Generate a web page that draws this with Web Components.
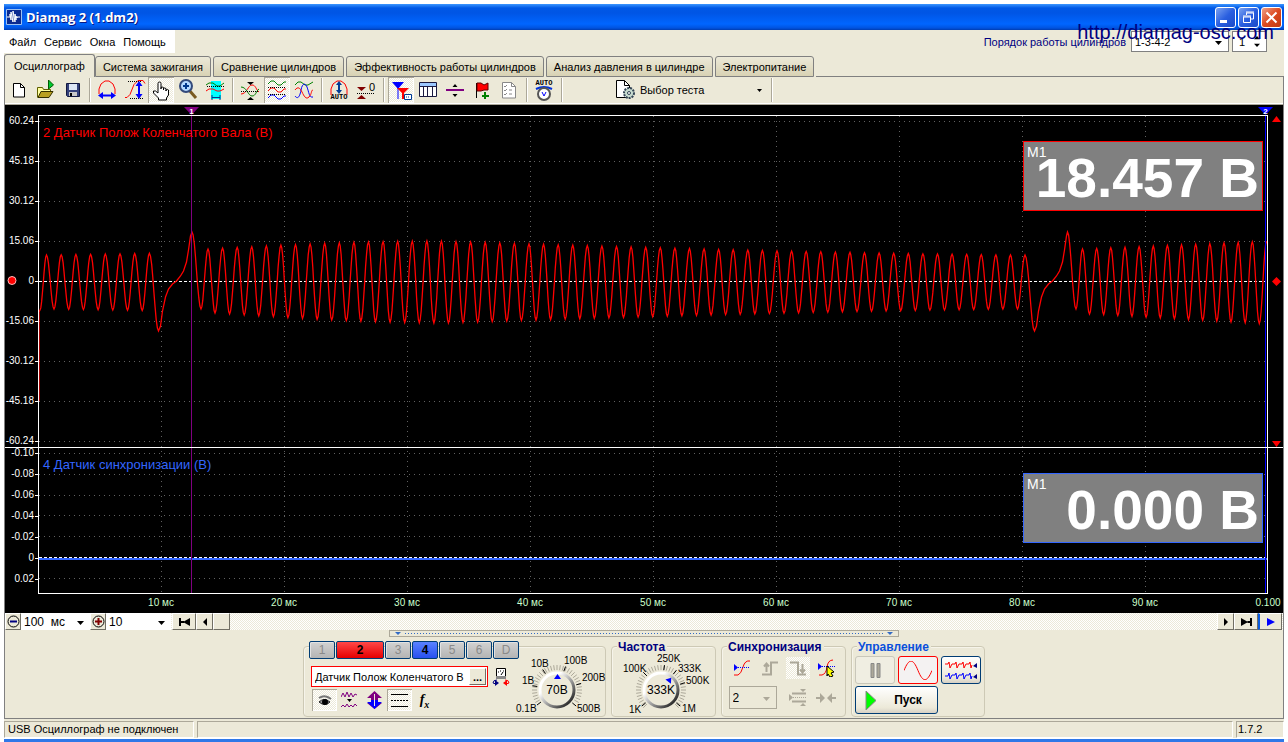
<!DOCTYPE html>
<html lang="ru">
<head>
<meta charset="utf-8">
<title>Diamag 2 (1.dm2)</title>
<style>
html,body{margin:0;height:100%}
body{background:#fff;color:#000;font:11px/14px "Liberation Sans",Arial,sans-serif;--face:#ece9d8;--line:#aca899;--hatch:repeating-conic-gradient(#fff 0 25%,#ece9d8 0 50%) 0 0/2px 2px}
</style>
</head>
<body>
<app-window></app-window>
<script>
const define = (tag, css, html, setup) => {
  const tpl = document.createElement('template');
  customElements.define(tag, class extends HTMLElement {
    constructor() {
      super();
      tpl.innerHTML = `<style>*{box-sizing:border-box}:host{display:block;box-sizing:border-box}${css}</style>` +
        (typeof html === 'function' ? html(this) : html);
      this.attachShadow({mode: 'open'}).append(tpl.content.cloneNode(true));
      if (setup) setup(this, this.shadowRoot);
    }
  });
};
const svg = (w, h, body, extra = '') =>
  `<svg width="${w}" height="${h}" viewBox="0 0 ${w} ${h}" fill="none" stroke-width="1" aria-hidden="true" ${extra}>${body}</svg>`;

const wave = (y, c) => `<path d="M4 ${y + 2}l3-3h3l4 4h3l3-3h2" stroke="${c}"/>`;
const auto = y => `<text x="13" y="${y}" text-anchor="middle" font-size="7" font-weight="700" font-family="Liberation Mono" fill="#000">AUTO</text>`;
const icons = {
  new: '<path d="M8.500 6.500h7l4 4v9.500h-11z" fill="#fff" stroke="#000"/><path d="M15.500 6.500v4h4" stroke="#000"/>',
  open: '<path d="M5.500 20.500v-10h5l1 2h7v3" fill="#ffffa0" stroke="#606000"/><path d="M6 20.500l3-6h12l-4 6z" fill="#b9a020" stroke="#333000"/><path d="M16.500 3v9l5-4z" fill="#00c832" stroke="#005a00"/>',
  save: '<path d="M7.500 6.500h13v13h-12l-1-1z" fill="#33407a" stroke="#111840"/><path d="M10 7h8v6h-8z" fill="#dce6f5"/><path d="M10 15h8v4h-8z" fill="#c8c8c8"/><path d="M11 16h2v3h-2z" fill="#000"/>',
  period: '<path d="M5 17v-5l2-5 4-3h4l4 3 2 5v5" stroke="#f00"/><path d="M7 18.500h12" stroke="#00f" stroke-width="2"/><path d="M9 15v7l-5-3.500zM17 15v7l5-3.500z" fill="#00f"/>',
  ampl: '<path d="M4 20.500h2l3-3 4-10 4-4h5l2 3" stroke="#f00"/><path d="M7 4.500h13M9 21.500h13" stroke="#000" stroke-dasharray="1 1"/><path d="M18 8v10" stroke="#00f" stroke-width="2"/><path d="M14.500 9h7L18 4zM14.500 17h7L18 22z" fill="#00f"/>',
  hand: '<path d="M10 16V6.500q0-1.500 1.500-1.500T13 6.500V12v-1.500q1-1 2.500 0V13v-1.500q1-1 2.500 0V14v-1q2-1 2.500 0v5l-2 3v2h-8v-2l-5-5v-2h2z" fill="#fff" stroke="#000"/>',
  zoom: '<path d="M14 13l7 8" stroke="#7a5a20" stroke-width="3"/><circle cx="11" cy="9" r="6" fill="#b4d8ff" stroke="#33497a" stroke-width="2"/><path d="M8 9h6M11 6v6" stroke="#00378c" stroke-width="2"/>',
  band: '<path d="M9 4h10v18H9z" fill="#0ff"/><path d="M4 8l3-2h4l4 3h3l4-3" stroke="#008000"/><path d="M5 9.500h18" stroke="#000" stroke-dasharray="1 1"/><path d="M4 14l3-2h4l4 2h3l4-2" stroke="#f00"/><path d="M10 20.500h8M10 18v5M18 18v5" stroke="#00378c"/>',
  cross: '<path d="M4 17c6 0 7-9 11-9s4 5 7 7" stroke="#f00"/><path d="M4 10c6 0 7 9 11 9s4-5 7-7" stroke="#008000"/><path d="M4 14.500h18" stroke="#000" stroke-dasharray="1 1"/><path d="M10 5h7l-3.500 3zM10 23h7l-3.500-3z" fill="#000"/>',
  waves: wave(5, '#008000') + wave(12, '#f00') + wave(19, '#00f') + '<path d="M4 10.500h18M4 17.500h18" stroke="#000" stroke-dasharray="1 1"/>',
  overlay: '<path d="M4 8l3-3h3l4 3h3l5-3" stroke="#008000"/><path d="M4 19c3 4 5 0 6-6s4-8 6-3 2 11 6 10" stroke="#00f"/><path d="M4 13c3-4 5-2 7 2s4 8 7 5 2-7 4-7" stroke="#f00"/>',
  auto: '<path d="M5 18v-6l2-5 4-3h4l4 3 2 5v6" stroke="#f00"/><path d="M13 6v8" stroke="#003c96" stroke-width="2"/><path d="M10 8h6l-3-4zM10 13h6l-3 4z" fill="#003c96"/>' + auto(22),
  zero: '<path d="M4 10h9l-4.500 4zM4 22h9l-4.500-4z" fill="#800000"/><path d="M4 16.500h18" stroke="#000" stroke-dasharray="1 1"/><text x="19" y="14" text-anchor="middle" font-size="11" font-family="Liberation Sans" fill="#000">0</text>',
  markers: '<path d="M4 5h12l-6 7z" fill="#00f"/><path d="M10 9v13" stroke="#00f"/><path d="M9 11h12l-6 6z" fill="#f00"/><path d="M15 14v8" stroke="#f00" stroke-width="2"/><path d="M16.500 17.500h7v5h-7z" fill="#fff" stroke="#003c96"/><path d="M18 20h4" stroke="#003c96" stroke-dasharray="1 1"/>',
  table: '<path d="M4.500 5.500h17v14h-17z" fill="#fff" stroke="#1a1a40"/><path d="M5 6h16v3H5z" fill="#9cc8ff"/><path d="M5 9.500h16M8.500 9v10M12.500 9v10M17.500 9v10" stroke="#1a1a40"/>',
  split: '<path d="M4 13h18" stroke="#800080" stroke-width="2"/><path d="M10.500 10h5L13 7zM10.500 17h5L13 20z" fill="#000"/>',
  flag: '<path d="M7.500 6v15" stroke="#000"/><path d="M8 6h4l3 2 4-2v7h-4l-3 1H8z" fill="#f00" stroke="#600000"/><path d="M13 19h7M16 15v7" stroke="#008000" stroke-width="2"/>',
  list: '<path d="M6.500 5.500h9l4 4v11.500h-13z" fill="#fff" stroke="#888"/><path d="M15.500 5.500v4h4M8 9l1 1 2-2M8 13l1 1 2-2M8 17l1 1 2-2M13 13h3M13 17h3" stroke="#888"/>',
  clock: auto(8) + '<path d="M5 12q8-4 16 0" stroke="#0032dc" stroke-width="2"/><circle cx="13" cy="17" r="6" fill="#fff" stroke="#555" stroke-width="2"/><path d="M11 15l2 4 2-4" stroke="#00f"/>'
};

define('app-window', `
:host{display:flex;flex-direction:column;min-height:100vh;padding:4px 4px 0;position:relative;overflow:hidden}
.body{display:flex;flex-direction:column;flex:1;background:var(--face)}
.page{display:flex;flex-direction:column;flex:1;border-left:1px solid gray;border-right:1px solid gray;border-bottom:1px solid gray}
scope-plot{flex:1}
.edge{height:5px;background:linear-gradient(#fff 1px,#2f78e8 1px);margin:0}
.mark{position:absolute;right:14px;top:20px;font-size:20px;line-height:24px;color:#000080;text-decoration:none}
`, `
<title-bar></title-bar>
<div class="body">
<menu-row></menu-row><tab-strip></tab-strip>
<div class="page"><tool-row></tool-row><scope-plot></scope-plot><scroll-row></scroll-row><control-panel></control-panel></div>
<status-bar></status-bar></div><div class="edge"></div>
<a class="mark" href="http://diamag-osc.com">http://diamag-osc.com</a>`);

define('title-bar', `
:host{display:flex;align-items:center;height:26px;padding:0 2px;background:linear-gradient(#3c96ff,#0058e6 4px,#0055e5 9px,#0066ff 20px,#0053e0 24px,#003cb0)}
h1{flex:1;margin:0 0 0 4px;font:700 13px/20px "Open Sans","Noto Sans",sans-serif;color:#fff;text-shadow:1px 1px #0a1883}
button{width:21px;height:21px;margin-left:2px;padding:0;border:1px solid #fff;border-radius:3px;background:linear-gradient(135deg,#7ba2f0,#2a5fe0 50%,#1a4ac8)}
.x{background:linear-gradient(135deg,#f0a088,#dc4a20 50%,#c03a10)}
svg{display:block}`,
svg(16, 16, '<path d="M.500 .500h15v15h-15z" fill="#0a2a90" stroke="#9cc0f0"/><path d="M1 8h3V5l1 6V3l2 10V2l2 11V5l1 6V7l1 2V8h3" stroke="#fff"/>') +
`<h1>Diamag 2 (1.dm2)</h1>
<button aria-label="Свернуть">${svg(19, 19, '<path d="M4 12h7v3H4z" fill="#fff"/>')}</button>
<button aria-label="Восстановить">${svg(19, 19, '<path d="M7 5h8M7 4h8M14.500 5v6H12M7.500 5v2M4 8h8M4 9h8M4.500 9v5.500h7V9" stroke="#fff"/>')}</button>
<button class="x" aria-label="Закрыть">${svg(19, 19, '<path d="M4.500 4.500l10 10M14.500 4.500l-10 10" stroke="#fff" stroke-width="2"/>')}</button>`);

define('drop-down', `
:host{display:grid;background:#fff}
select{grid-area:1/1;appearance:none;border:0;background:none;margin:0;padding:0 0 0 3px;font:inherit;color:inherit;min-width:0;width:100%;height:100%;outline:0}
svg{grid-area:1/1;justify-self:end;align-self:center;margin:2px 6px 0 0;pointer-events:none;color:var(--arrow,#000)}`,
h => `<select aria-label="${h.getAttribute('label')}"><option>${h.getAttribute('value')}</option></select>${svg(7, 4, '<path d="M0 0h7L3.500 4z" fill="currentColor"/>')}`);

define('menu-row', `
:host{display:flex;height:24px;align-items:flex-start}
nav{display:flex;gap:8px;height:23px;padding:0 9px 0 5px;background:#fff;align-items:center}
a{color:#000;text-decoration:none}
.order{margin-left:auto;display:flex;align-items:center;gap:3px;padding:1px 17px 0 0;color:#000080}
label{margin-right:2px}
drop-down,.spin{height:21px;border:1px solid gray;color:#000;background:#fff}
drop-down{width:98px}.spin{display:flex;width:35px;align-items:center;padding-right:6px}
input{width:21px;border:0;padding:0 0 0 6px;font:inherit;background:none}`,
`<nav><a href="#">Файл</a><a href="#">Сервис</a><a href="#">Окна</a><a href="#">Помощь</a></nav>
<div class="order"><label for="n">Порядок работы цилиндров</label><drop-down label="Порядок работы" value="1-3-4-2"></drop-down>
<div class="spin"><input id="n" value="1">${svg(7, 13, '<path d="M0 4h7L3.500 0zM0 9h7l-3.500 4z" fill="#000"/>')}</div></div>`);

define('tab-strip', `
:host{display:flex;align-items:flex-end;height:23px}
button{height:21px;margin:0 2px 0 0;padding:0 7px;border:1px solid gray;border-radius:3px 3px 0 0;background:linear-gradient(#ece9d8,#d8d2b4);font:inherit;color:inherit;white-space:nowrap}
.on{height:23px;margin:0;padding:0 9px;border-bottom:0;background:var(--face)}
i{flex:1;border-bottom:1px solid gray;height:1px}
button:not(.on){box-shadow:2px 0 0 -1px var(--face)}`,
`<button class="on">Осциллограф</button><button>Система зажигания</button><button>Сравнение цилиндров</button><button>Эффективность работы цилиндров</button><button>Анализ давления в цилиндре</button><button>Электропитание</button><i></i>`);

define('tool-button', `
:host{width:26px;height:26px}
button{display:block;width:100%;height:100%;padding:0;border:0;background:none}
:host([on]) button{background:var(--hatch);box-shadow:inset 1px 1px #aca899,inset -1px -1px #fff}
svg{display:block}`,
h => `<button aria-label="${h.getAttribute('icon')}">${svg(26, 26, icons[h.getAttribute('icon')])}</button>`);

const sep = '<hr>';
const tb = (n, on) => `<tool-button icon="${n}"${on ? ' on' : ''}></tool-button>`;
define('tool-row', `
:host{display:flex;gap:1px;height:28px;border-bottom:1px solid #aca899;box-shadow:inset 0 -1px #fff}
hr{width:7px;height:24px;margin:1px 0;border:0;background:linear-gradient(90deg,#0000 3px,#aca899 3px 4px,#fff 4px 5px,#0000 5px)}
.test{display:flex;align-items:center;width:201px;height:26px;border:0;padding:0 5px 0 50px;background:none;font:inherit;gap:4px}
.test span{flex:1;text-align:left}`,
tb('new') + tb('open') + tb('save') + sep + tb('period') + tb('ampl') + tb('hand', 1) + tb('zoom') + tb('band') + sep +
tb('cross') + tb('waves', 1) + tb('overlay') + sep + tb('auto') + tb('zero') + sep +
tb('markers', 1) + tb('table') + tb('split') + tb('flag') + tb('list') + sep + tb('clock') + sep +
`<button class="test">${svg(20, 20, '<path d="M.500 .500h8l5 5v12H.500z" fill="#fff" stroke="#000"/><path d="M8.500 .500v5h5" stroke="#000"/><circle cx="13" cy="13" r="5" fill="#c8dcd0" stroke="#345" stroke-width="2" stroke-dasharray="2 1"/><circle cx="13" cy="13" r="1.500" fill="#fff" stroke="#345"/>')}<span>Выбор теста</span>${svg(5, 3, '<path d="M0 0h5L2.500 3z" fill="#000"/>')}</button>` + sep);

define('meter-box', `
:host{position:absolute;right:5px;width:240px;height:70px;background:gray;border:1px solid currentColor}
small{position:absolute;left:3px;top:2px;font-size:14px;line-height:16px;color:#fff}
output{display:block;text-align:right;padding-right:3px;font-size:55px;line-height:72px;font-weight:700;color:#fff}`,
'<small>M1</small><output><slot></slot></output>');

/* Crankshaft sensor trace: half-cosines between the extremes, with the missing-tooth gap drawn point by point. */
const signal = () => {
  const key = [[2, 195], [8.5, 140], [16, 194]];
  for (let i = 1; i < 8; i++) key.push([8.5 + i * 14.7, 140 - i / 4], [16 + i * 14.7, i < 7 ? 194 + i / 4 : 216]);
  key[key.length - 1][0] = 120.5;
  const out = [];
  const curve = list => {
    out.push(list[0]);
    for (let i = 1; i < list.length; i++) {
      const [a, b] = list[i - 1], [c, d] = list[i];
      for (let t = 1; t <= 8; t++) {
        out.push([a + (c - a) * t / 8, b + (d - b) * (1 - Math.cos(Math.PI * t / 8)) / 2]);
      }
    }
  };
  const gap = x => [[2, 211], [4, 196], [7, 182], [10, 174], [14, 169], [18, 166], [22, 161], [25, 156], [28, 147], [30, 135], [32, 121]]
    .forEach(p => out.push([x + p[0], p[1]]));
  curve(key);
  gap(120.5);
  const mid = [[154, 117], [163, 194]];
  for (let i = 0; i <= 56; i++) {
    const x = 170 + i * 14.59;
    const up = i < 16;
    const g = up ? Math.sin(i / 16 * Math.PI / 2) : Math.pow(1 - (i - 16) / 40, 1.4);
    mid.push([x, (up ? 134 : 140) - g * (up ? 8 : 14)]);
    mid.push([x + 7, i === 56 ? 216 : up ? 198 + g * 10 : 194 + g * 14]);
  }
  mid[mid.length - 1][0] = 996.5;
  curve(mid);
  gap(996.5);
  const end = [[1029.5, 117], [1038, 194]];
  for (let i = 0; i < 14; i++) end.push([1044.5 + i * 14.15, 134 - i * 0.6], [1051.5 + i * 14.15, 199 + i * 0.8]);
  end.pop();
  curve(end);
  return 'M1 286L1 197L' + out.map(p => p.map(n => n.toFixed(1)).join(' ')).join('L');
};
const range = (n, f) => Array.from({length: n}, (_, i) => f(i)).join('');
define('scope-plot', `
:host{display:grid;grid-template:10px minmax(0,332fr) minmax(0,147fr) 19px/33px minmax(0,1fr) 15px;background:#000;overflow:hidden;position:relative;font-size:10px;line-height:12px;color:#fff}
.top{grid-area:1/2;position:relative}
.graph{grid-area:2/2/4/3;width:100%;height:100%;display:block}
.y{grid-column:1;display:flex;flex-direction:column;justify-content:space-between;text-align:right;position:relative}
.y span{padding-right:4px;background:linear-gradient(#fff,#fff) right 6px/3px 1px no-repeat}
.b{grid-row:3;padding-bottom:9px}.a{grid-row:2}
.rule{grid-area:3/1/4/4;height:1px;background:#fff;z-index:1}
.ch{position:relative;grid-column:2}
.ch1{grid-row:2;color:#f00}.ch2{grid-row:3;color:#36f}
h2{margin:0;padding:10px 0 0 5px;font-size:13px;line-height:16px;font-weight:400}
meter-box{top:26px}
.x{grid-area:4/2;display:grid;grid-template-columns:repeat(10,1fr);margin:0 -5% 0 5%;padding-top:3px;text-align:center;color:#cfc}
.side{grid-area:2/3;display:flex;flex-direction:column;justify-content:space-between;align-items:center;padding:1px 0 0 2px;color:#f00}
.dot{position:absolute;left:2px;top:50%;margin-top:-5px}
.m{position:absolute;top:2px}.m1{left:12.5%;margin-left:-8px}.m2{right:-5px}
svg{display:block}`,
`<div class="top"><div class="m m1">${svg(15, 8, '<path d="M0 0h15L7.500 8z" fill="#800080"/><text x="7.500" y="7" text-anchor="middle" font-size="8" font-weight="700" fill="#fff">1</text>')}</div><div class="m m2">${svg(15, 8, '<path d="M0 0h15L7.500 8z" fill="#00f"/><text x="7.500" y="7" text-anchor="middle" font-size="8" font-weight="700" fill="#fff">2</text>')}</div></div>
<div class="y a">${['60.24', '45.18', '30.12', '15.06', '0', '-15.06', '-30.12', '-45.18', '-60.24'].map(t => `<span>${t}</span>`).join('')}<div class="dot">${svg(10, 9, '<circle cx="5" cy="4.500" r="4" fill="#f00" stroke="#fbb"/>')}</div></div>
<div class="y b">${['-0.10', '-0.08', '-0.06', '-0.04', '-0.02', '0', '0.02'].map(t => `<span>${t}</span>`).join('')}</div>
<svg class="graph" viewBox="0 0 1230 479" preserveAspectRatio="none" fill="none" aria-hidden="true">
<g stroke="#606060" stroke-dasharray="1 4" shape-rendering="crispEdges">${range(9, i => `<path d="M1 ${6.5 + i * 40}H1228"/>`)}${range(7, i => `<path d="M1 ${Math.round(338 + i * 20.8) + .5}H1228"/>`)}${range(9, i => `<path d="M${123.5 + i * 123} 1V478"/>`)}</g>
<path d="M0 443.500H1229" stroke="#36f" stroke-width="2" shape-rendering="crispEdges"/>
<path d="M1 166.500H1228M1 442.500H1228" stroke="#fff" stroke-dasharray="3 2" shape-rendering="crispEdges"/>
<path d="${signal()}" stroke="#f00" stroke-width="1.300"/>
<path d="M153.500 0V479" stroke="#800080" shape-rendering="crispEdges"/><path d="M1227.500 0V479" stroke="#00f" shape-rendering="crispEdges"/>
<path d="M.500 .500H1229.500V478.500H.500z" stroke="#fff" shape-rendering="crispEdges"/></svg>
<i class="rule"></i>
<div class="ch ch1"><h2>2 Датчик Полож Коленчатого Вала (В)</h2><meter-box>18.457 В</meter-box></div>
<div class="ch ch2"><h2>4 Датчик синхронизации (В)</h2><meter-box>0.000 В</meter-box></div>
<div class="side">${svg(9, 6, '<path d="M0 6h9L4.500 0z" fill="#f00"/>')}${svg(9, 9, '<path d="M4.500 0L9 4.500 4.500 9 0 4.500z" fill="#f00"/>')}${svg(9, 6, '<path d="M0 0h9L4.500 6z" fill="#f00"/>')}</div>
<div class="x">${range(9, i => `<span>${(i + 1) * 10} мс</span>`)}<span>0.100</span></div>`);

define('scroll-row', `
:host{display:flex;height:17px;background:var(--hatch);padding-right:1px;font-size:12px}
button{display:grid;place-items:center;width:17px;padding:0;border:1px solid;border-color:#fff #716f64 #716f64 #fff;background:var(--face)}
.z{width:16px}.w{width:24px}.gap{flex:1}drop-down{width:69px}.n{width:65px}
.first{margin-left:1px}.go{border-left:2px solid #0a5ce0}`,
`<button class="z" aria-label="Сжать">${svg(13, 13, '<circle cx="6.500" cy="6.500" r="5.500" stroke="#000"/><path d="M3 6.500h7" stroke="#000080" stroke-width="2"/>')}</button><drop-down label="Развёртка" value="100&nbsp; мс"></drop-down>
<button class="z" aria-label="Растянуть">${svg(13, 13, '<circle cx="6.500" cy="6.500" r="5.500" stroke="#000"/><path d="M3 6.500h7M6.500 3v7" stroke="#800000" stroke-width="2"/>')}</button><drop-down class="n" label="Масштаб" value="10"></drop-down>
<button class="w first" aria-label="В начало">${svg(11, 8, '<path d="M0 0h2v8H0zM11 0v8L4 4zM2 3h3v2H2z" fill="#000"/>')}</button><button aria-label="Назад">${svg(4, 8, '<path d="M4 0v8L0 4z" fill="#000"/>')}</button><button aria-label="Ползунок"></button><span class="gap"></span>
<button aria-label="Вперёд">${svg(4, 8, '<path d="M0 0v8l4-4z" fill="#000"/>')}</button><button class="w" aria-label="В конец">${svg(11, 8, '<path d="M9 0h2v8H9zM0 0v8l7-4zM6 3h3v2H6z" fill="#000"/>')}</button><button class="w go" aria-label="Пуск">${svg(8, 8, '<path d="M0 0v8l8-4z" fill="#00f"/>')}</button>`);

define('group-box', `
:host{position:relative;height:76px;padding:0 4px}
:host::before{content:"";position:absolute;inset:5px 0 0;border:1px solid #cdc9b5;border-radius:4px;box-shadow:inset 1px 1px #f6f4ea}
h3{position:relative;width:max-content;margin:0 0 0 2px;padding:0 2px 0 1px;background:var(--face);font:700 12px/12px "Liberation Sans",sans-serif;color:var(--tint,#000080)}
.body{position:relative}`,
h => (h.getAttribute('title-text') ? `<h3>${h.getAttribute('title-text')}</h3>` : '') + '<div class="body"><slot></slot></div>');

const knob = (w, cx, value, labels, start, end, needle) => {
  const c = 37, pt = (a, r) => [cx + r * Math.sin(a * Math.PI / 180), c - r * Math.cos(a * Math.PI / 180)].map(n => n.toFixed(1)).join(' ');
  let s = '';
  for (let a = start; a <= end; a += 7.5) s += `<path d="M${pt(a, 20)}L${pt(a, 25)}" stroke="#aca899"/>`;
  labels.forEach(l => { s += `<path d="M${pt(l[3], 20)}L${pt(l[3], 25)}" stroke="#000"/><text x="${l[1]}" y="${l[2]}" font-size="10" fill="#000">${l[0]}</text>`; });
  return svg(w, 63, `<defs><linearGradient id="g" x1="0" y1="0" x2="1" y2="1"><stop offset=".3" stop-color="#fff"/><stop offset="1" stop-color="#000"/></linearGradient></defs>${s}
<circle cx="${cx}" cy="${c}" r="17" fill="#ece9d8" stroke="url(#g)" stroke-width="3"/>
<path transform="rotate(${needle} ${cx} ${c})" d="M${cx - 3} 26h7l-3.500-5z" fill="#00f"/><text x="${cx}" y="41" text-anchor="middle" font-size="12" fill="#000">${value}</text>`, `role="img"`);
};
define('volt-knob', 'svg{display:block}', knob(92, 43, '70В', [['0.1В', 2, 59, -127], ['1В', 8, 31, -80], ['10В', 17, 14, -35], ['100В', 50, 11, 20], ['200В', 68, 28, 75], ['500В', 63, 59, 130]], -120, 125, 0));
define('freq-knob', 'svg{display:block}', knob(98, 46, '333K', [['1K', 14, 60, -130], ['100K', 8, 19, -45], ['250K', 42, 9, 8], ['333K', 63, 19, 38], ['500K', 71, 31, 73], ['1M', 67, 59, 130]], -135, 135, 38));

define('panel-button', `
:host{width:40px;height:28px}
button{display:flex;align-items:center;justify-content:center;width:100%;height:100%;padding:0;border:1px solid #003c74;border-radius:3px;background:linear-gradient(#fff,#ece9d8 80%,#d6d0c5);font:700 12px/16px "Liberation Sans",sans-serif}
:host([off]) button{border-color:#c9c7ba;background:#f0eee2}
:host([hot]) button{border-color:#f00;background:#f4f2f2}
:host([wide]){width:83px}:host([wide]) button{gap:18px;padding-right:6px}`, '<button><slot></slot></button>');

define('channel-keys', `
:host{display:flex;gap:1px;margin-left:2px}
button{width:26px;height:18px;flex:none;padding:0;border:1px solid #003c74;border-radius:2px;background:linear-gradient(#d2d2d2,#b4b4b4);font-size:12px;line-height:14px;font-family:inherit;color:#8a8a8a;box-shadow:inset 1px 1px #e2e2e2}
.r{width:48px;background:linear-gradient(#ff4848,#e60000);color:#000;font-weight:700;box-shadow:none}
.b{background:linear-gradient(#5a82ff,#2850f0);color:#000;box-shadow:none;font-weight:700}`,
'<button>1</button><button class="r">2</button><button>3</button><button class="b">4</button><button>5</button><button>6</button><button>D</button>');

define('control-panel', `
:host{padding-bottom:1px}
.split{display:flex;justify-content:space-between;align-items:center;width:510px;max-width:100%;height:7px;margin:0 auto -1px;border:1px solid #aca899;padding:0 5px;gap:4px}
.split i{flex:1;height:1px;background:repeating-linear-gradient(90deg,#316ac5 0 1px,#0000 1px 3px)}
.row{display:flex;justify-content:center;gap:5px;padding-top:5px}
.g1{width:303px}.g2{width:105px}.g3{width:125px}.g4{width:134px}
.cols{display:flex}
.l{width:207px;flex:none}
.name{display:flex;align-items:center;gap:4px;margin:7px 0 0 4px}
.name svg{flex:none}
.field{display:flex;width:177px;height:21px;border:1px solid #f00;background:#fff;padding:1px}
input{flex:1;min-width:0;border:0;padding:0 0 0 2px;background:none;font:11px/16px "Liberation Sans",sans-serif;outline:0}
.field button{width:17px;height:17px;padding:0;border:1px solid;border-color:#fff #716f64 #716f64 #fff;background:var(--face);font:700 11px/8px "Liberation Sans"}
.tools{display:flex;margin:2px 0 0 5px}
.t{width:25px;height:22px;padding:0;border:0;background:none;display:grid;place-items:center;font:inherit}
.on{background:var(--hatch);box-shadow:inset 1px 1px #aca899,inset -1px -1px #fff}
volt-knob{margin-top:12px;width:92px;flex:none}
.fx{font:italic 700 14px/16px "Liberation Serif",serif}.fx sub{font-size:10px;line-height:1px}
.sync{display:grid;grid-template-columns:repeat(4,28px);gap:7px 0;justify-content:center;align-items:center;margin-top:4px}
.sync drop-down{grid-column:span 2;justify-self:start;width:48px;height:23px;margin-left:1px;border:1px solid #aca899;background:var(--face);--arrow:#aca899;font-size:12px}
.s{width:24px;height:22px;padding:0;border:0;background:none;display:grid;place-items:center;margin:0 auto}
.h{background:var(--hatch)}
.ctl{display:grid;grid-template-columns:repeat(3,40px);gap:2px 3px;margin-top:3px}.ctl [wide]{grid-column:span 2}
svg{display:block}`,
`<div class="split">${svg(6, 3, '<path d="M0 0h6L3 3z" fill="#316ac5"/>')}<i></i>${svg(6, 3, '<path d="M0 0h6L3 3z" fill="#316ac5"/>')}</div>
<div class="row">
<group-box class="g1"><div class="cols"><div class="l"><channel-keys></channel-keys>
<div class="name"><div class="field"><input aria-label="Датчик" value="Датчик Полож Коленчатого В"><button>...</button></div>
${svg(18, 19, '<path d="M4.500 1.500h9v10h-9z" fill="#fff" stroke="#000"/><path d="M4 9h10v3H4z" fill="#888"/><path d="M6 5h1M8 4h1M11 4h1M9 8l2-3" stroke="#000"/><path d="M5 13q-4 0-4 3l3 1" stroke="#000080"/><path d="M3 13v6l4-3z" fill="#000080"/><path d="M13 13q4 0 4 3l-3 1" stroke="#f00"/><path d="M15 13v6l-4-3z" fill="#f00"/>')}</div>
<div class="tools">
<button class="t on" aria-label="Показать">${svg(15, 12, '<path d="M2 4q6-4 12 1" stroke="#777" stroke-width="2"/><path d="M2 8q5-5 11 0-5 5-11 0z" fill="#999" stroke="#222"/><circle cx="8" cy="8" r="3" fill="#000"/>')}</button>
<button class="t" aria-label="Форма">${svg(17, 18, '<path d="M0 6l2-4 2 4 2-5 2 5 2-4 2 4 2-3 2 1M0 16l2-2 2 2 2-3 2 3 2-2 2 2 2-3 2 2" stroke="#800080"/><path d="M6 8h5l-2.500 3z" fill="#000"/>')}</button>
<button class="t" aria-label="Инверсия">${svg(15, 18, '<path d="M7.500 0L15 7h-4v5h4l-7.500 6L0 12h4V7H0z" fill="#800080"/><path d="M0 11h4V9h7v2h4l-7.500 7z" fill="#00f"/><path d="M7.500 3v12" stroke="#ece9d8"/>')}</button>
<button class="t on" aria-label="Уровни">${svg(17, 15, '<path d="M0 1.500h17M0 13.500h17" stroke="#000"/><path d="M0 7.500h17" stroke="#000" stroke-dasharray="2 1"/>')}</button>
<button class="t fx" aria-label="Функция"><span>f<sub>x</sub></span></button></div></div><volt-knob></volt-knob></div></group-box>
<group-box class="g2" title-text="Частота"><freq-knob></freq-knob></group-box>
<group-box class="g3" title-text="Синхронизация"><div class="sync">
<button class="s" aria-label="Уровень">${svg(18, 18, '<path d="M1 16h4q3-1 5-8t7-6" stroke="#f00"/><path d="M1 8.500h16" stroke="#00f" stroke-dasharray="1 1"/><path d="M1 5v7l4-3.500z" fill="#00f"/>')}</button>
<button class="s" aria-label="Фронт">${svg(18, 16, '<path d="M1 14.500h9v-12h7M5.500 4v8M3 6.500l2.500-3 2.500 3" stroke="#aca899" stroke-width="2"/>')}</button>
<button class="s h" aria-label="Спад">${svg(18, 16, '<path d="M1 2.500h8v12h8M13.500 4v8M11 9.500l2.500 3 2.500-3" stroke="#aca899" stroke-width="2"/>')}</button>
<button class="s" aria-label="Указать">${svg(18, 18, '<path d="M2 16h3q4-1 5-8t6-7" stroke="#f00"/><path d="M1 7.500h17" stroke="#00f" stroke-dasharray="1 1"/><path d="M1 4v7l4-3.500z" fill="#00f"/><path d="M10 7l7 6-3 1 2 3-3 1-2-3-1 2z" fill="#ff0" stroke="#000"/>')}</button>
<drop-down label="Канал" value="2"></drop-down>
<button class="s" aria-label="Порог">${svg(18, 17, '<path d="M3 4.500h14M3 12.500h14" stroke="#aca899" stroke-width="2"/><path d="M2 8.500h15" stroke="#aca899" stroke-dasharray="1 1"/><path d="M0 5v7l4-3.500zM11 0h6l-3 3zM11 17h6l-3-3z" fill="#aca899"/>')}</button>
<button class="s" aria-label="Сдвиг">${svg(20, 10, '<path d="M0 5h6M20 5h-6" stroke="#aca899" stroke-width="2"/><path d="M4 0v10l5-5zM16 0v10l-5-5z" fill="#aca899"/>')}</button></div></group-box>
<group-box class="g4" title-text="Управление" style="--tint:#0a50dc"><div class="ctl">
<panel-button off>${svg(11, 15, '<path d="M1 .500h3v14H1zM7 .500h3v14H7z" fill="#aca899" stroke="#888"/>')}</panel-button>
<panel-button hot>${svg(28, 19, '<path d="M0 9.500C5-3 9-3 14 9.500s9 12 14 0" stroke="#f00"/>')}</panel-button>
<panel-button>${svg(34, 19, '<path d="M1 3h3l1-2 1 6 2-4h3l1-2 1 6 2-4h3l1-2 1 6 2-4h3l1-2 1 6 1-3" stroke="#f00"/><path d="M1 15h3l1-3 1 6 2-4h3l1-2 1 6 2-4h3l1-2 1 6 2-4h3l1-2 1 6 1-3" stroke="#00f"/><path d="M33 2v5l-4-2zM33 13v5l-4-2z" fill="#000080"/>')}</panel-button>
<panel-button wide>${svg(11, 19, '<path d="M1 0v19l10-9.500z" fill="#0f0" stroke="#888"/>')}<span>Пуск</span></panel-button></div></group-box></div>`);

define('status-bar', `
:host{display:flex;gap:3px;padding-top:2px;height:19px}
span{border:1px solid;border-color:#aca899 #fff #fff #aca899;padding:0 3px;line-height:15px;white-space:nowrap;overflow:hidden}
.a{width:190px}.b{flex:1}.c{width:48px;padding:0 1px}`,
'<span class="a">USB Осциллограф не подключен</span><span class="b"></span><span class="c">1.7.2</span>');
</script>
</body>
</html>
